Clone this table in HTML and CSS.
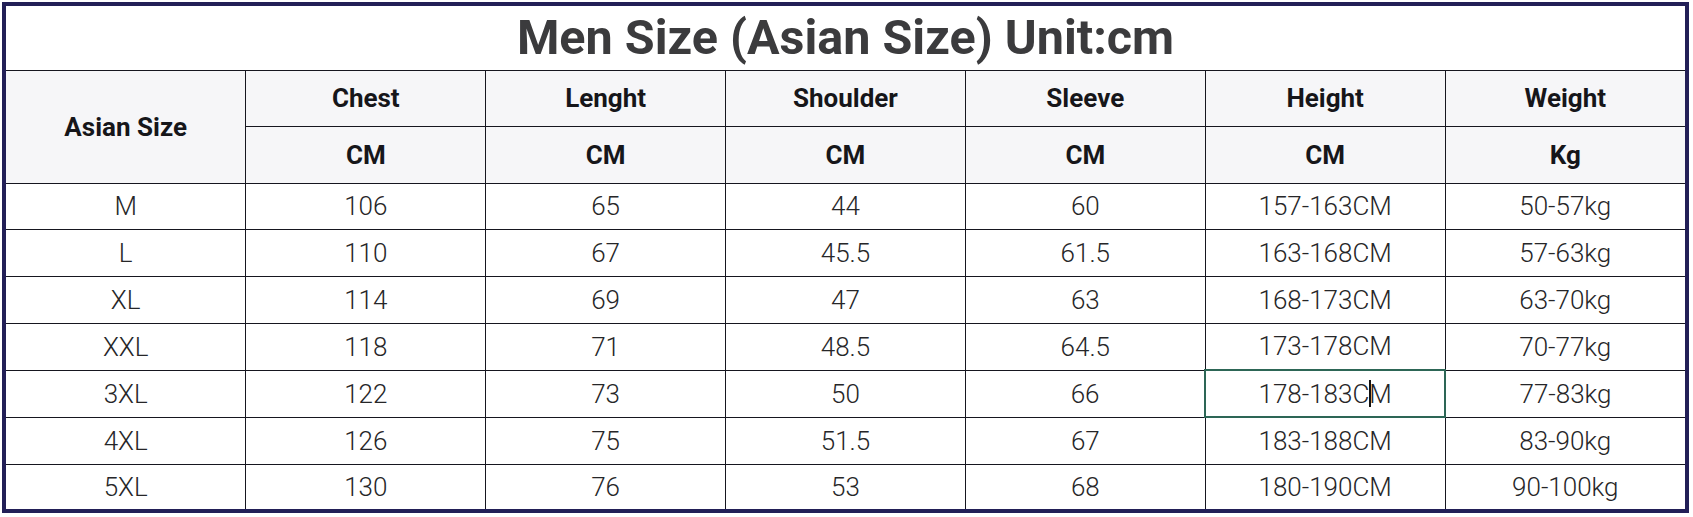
FILE: index.html
```html
<!DOCTYPE html>
<html lang="en">
<head>
<meta charset="utf-8">
<title>Men Size (Asian Size) Unit:cm</title>
<link rel="stylesheet" href="styles.css">
</head>
<body>
<div class="frame">
  <table class="size-table">
    <colgroup>
      <col><col><col><col><col><col><col>
    </colgroup>
    <tr class="title-row">
      <th colspan="7" class="title">Men Size (Asian Size) Unit:cm</th>
    </tr>
    <tr class="head-row head-1">
      <th rowspan="2">Asian Size</th>
      <th>Chest</th>
      <th>Lenght</th>
      <th>Shoulder</th>
      <th>Sleeve</th>
      <th>Height</th>
      <th>Weight</th>
    </tr>
    <tr class="head-row head-2">
      <th>CM</th>
      <th>CM</th>
      <th>CM</th>
      <th>CM</th>
      <th>CM</th>
      <th>Kg</th>
    </tr>
    <tr class="data-row r46">
      <td>M</td><td>106</td><td>65</td><td>44</td><td>60</td><td>157-163CM</td><td>50-57kg</td>
    </tr>
    <tr class="data-row">
      <td>L</td><td>110</td><td>67</td><td>45.5</td><td>61.5</td><td>163-168CM</td><td>57-63kg</td>
    </tr>
    <tr class="data-row">
      <td>XL</td><td>114</td><td>69</td><td>47</td><td>63</td><td>168-173CM</td><td>63-70kg</td>
    </tr>
    <tr class="data-row">
      <td>XXL</td><td>118</td><td>71</td><td>48.5</td><td>64.5</td><td>173-178CM</td><td>70-77kg</td>
    </tr>
    <tr class="data-row">
      <td>3XL</td><td>122</td><td>73</td><td>50</td><td>66</td><td class="selected">178-183C<span class="caret"></span>M</td><td>77-83kg</td>
    </tr>
    <tr class="data-row">
      <td>4XL</td><td>126</td><td>75</td><td>51.5</td><td>67</td><td>183-188CM</td><td>83-90kg</td>
    </tr>
    <tr class="data-row r45">
      <td>5XL</td><td>130</td><td>76</td><td>53</td><td>68</td><td>180-190CM</td><td>90-100kg</td>
    </tr>
  </table>
</div>
</body>
</html>
```

FILE: styles.css
```css
html, body {
  margin: 0;
  padding: 0;
  background: #ffffff;
}

body {
  padding: 2px;
  width: 1687px;
}

.frame {
  border: 4px solid #221f57;
  width: 1679px;
  height: 503px;
  background: #ffffff;
  overflow: hidden;
}

.size-table {
  width: 100%;
  height: 100%;
  table-layout: fixed;
  border-collapse: collapse;
  border: hidden;
  font-family: Roboto, "Liberation Sans", Arial, sans-serif;
}

.size-table th,
.size-table td {
  border: 1.5px solid #16161f;
  text-align: center;
  vertical-align: middle;
  padding: 0;
}

.title-row {
  height: 64px;
}

.title {
  background: #ffffff;
  color: #3b3b3d;
  font-size: 48.5px;
  font-weight: 700;
}

.head-row th {
  background: #f6f6f8;
  color: #16161a;
  font-size: 26px;
  font-weight: 700;
}

.head-1 {
  height: 56px;
}

.head-2 {
  height: 57px;
}

.data-row {
  height: 47px;
}

.data-row.r46 {
  height: 46px;
}

.data-row.r45 {
  height: 45px;
}

.data-row td {
  color: #262628;
  font-size: 26px;
  font-weight: 300;
}

.size-table td.selected {
  border: 2px solid #2d6656;
}

.caret {
  display: inline-block;
  width: 1.5px;
  height: 27px;
  background: #111111;
  vertical-align: -4px;
  margin-right: -1.5px;
}
```
